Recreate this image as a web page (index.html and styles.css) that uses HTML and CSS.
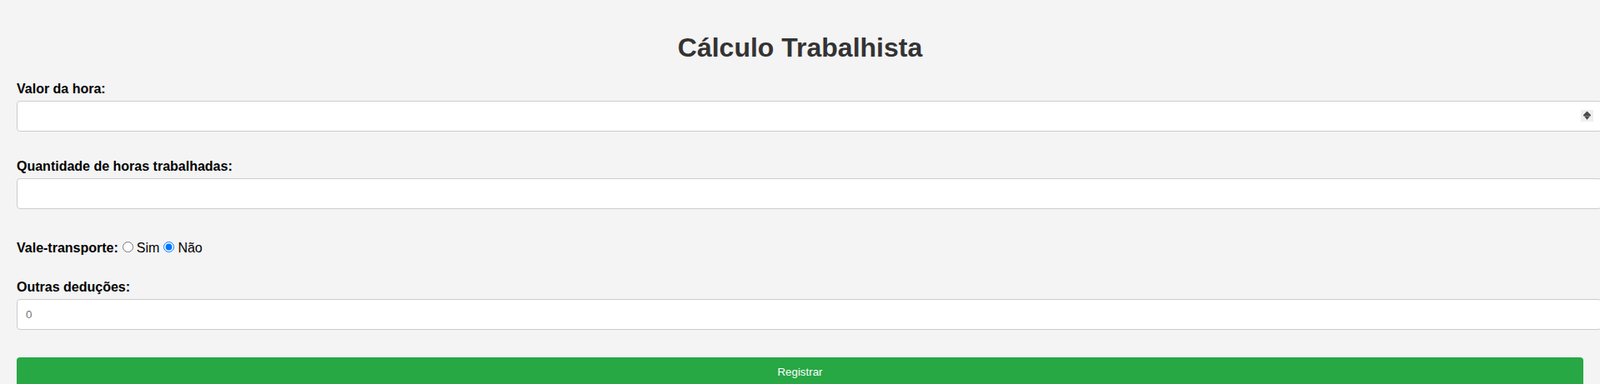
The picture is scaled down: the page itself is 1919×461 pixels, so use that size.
FILE: index.html
```html
<!DOCTYPE html>
<html lang="pt-BR">
<head>
<meta charset="utf-8">
<title>Cálculo Trabalhista</title>
<link rel="stylesheet" href="styles.css">
</head>
<body>
<h1 class="title">Cálculo Trabalhista</h1>
<form class="form">
  <div class="field">
    <label class="label" for="valor">Valor da hora:</label>
    <div class="input-wrap">
      <input class="input" type="number" id="valor">
      <span class="spinner" aria-hidden="true"><svg width="15" height="14" viewBox="0 0 15 14"><rect width="15" height="14" fill="#efefef"/><polygon points="7.5,1.5 3,6 12,6" fill="#4a4a4a"/><rect x="3" y="6" width="9" height="1.3" fill="#4a4a4a"/><polygon points="4,7.6 11,7.6 7.5,11.8" fill="#4a4a4a"/></svg></span>
    </div>
  </div>
  <div class="field">
    <label class="label" for="horas">Quantidade de horas trabalhadas:</label>
    <input class="input" type="number" id="horas">
  </div>
  <div class="radio-row"><span class="radio-title">Vale-transporte:</span><input class="radio" type="radio" name="vt" id="vt-sim"><label for="vt-sim" class="radio-label">Sim</label><input class="radio" type="radio" name="vt" id="vt-nao" checked><label for="vt-nao" class="radio-label">Não</label></div>
  <div class="field">
    <label class="label" for="outras">Outras deduções:</label>
    <input class="input" type="number" id="outras" placeholder="0">
  </div>
  <button class="button" type="button">Registrar</button>
</form>
</body>
</html>
```

FILE: styles.css
```css
html {
  overflow: hidden;
}
body {
  margin: 0;
  padding: 18px 20px;
  background: #f4f4f4;
  font-family: "Liberation Sans", Arial, sans-serif;
  font-size: 16px;
  color: #000;
}
.title {
  margin: 21.44px 0;
  font-size: 32px;
  font-weight: bold;
  text-align: center;
  color: #333;
}
.form {
  display: block;
}
.field {
  margin-bottom: 33px;
}
.label {
  display: block;
  margin-bottom: 5px;
  font-weight: bold;
}
.input-wrap {
  position: relative;
}
.input {
  display: block;
  width: 100%;
  padding: 10px;
  border: 1px solid #ccc;
  border-radius: 4px;
  background: #fff;
  font-family: "Liberation Sans", Arial, sans-serif;
  font-size: 13.333px;
  color: #000;
  -moz-appearance: textfield;
}
.input::-webkit-inner-spin-button,
.input::-webkit-outer-spin-button {
  -webkit-appearance: none;
  margin: 0;
}
.input::placeholder {
  color: #757575;
}
.spinner {
  position: absolute;
  top: 11px;
  right: -12px;
  width: 15px;
  height: 14px;
  display: block;
}
.spinner svg {
  display: block;
}
.radio-row {
  margin-top: 36px;
  margin-bottom: 29px;
}
.radio-title {
  font-weight: bold;
}
.radio {
  margin: 3px 3px 0 5px;
}
.radio-label {
  font-weight: normal;
  margin-left: 1px;
}
.button {
  display: block;
  width: 100%;
  margin-top: 33px;
  padding: 10px;
  border: none;
  border-radius: 4px;
  background: #28a745;
  color: #fff;
  font-family: "Liberation Sans", Arial, sans-serif;
  font-size: 13.333px;
  cursor: pointer;
}
```
